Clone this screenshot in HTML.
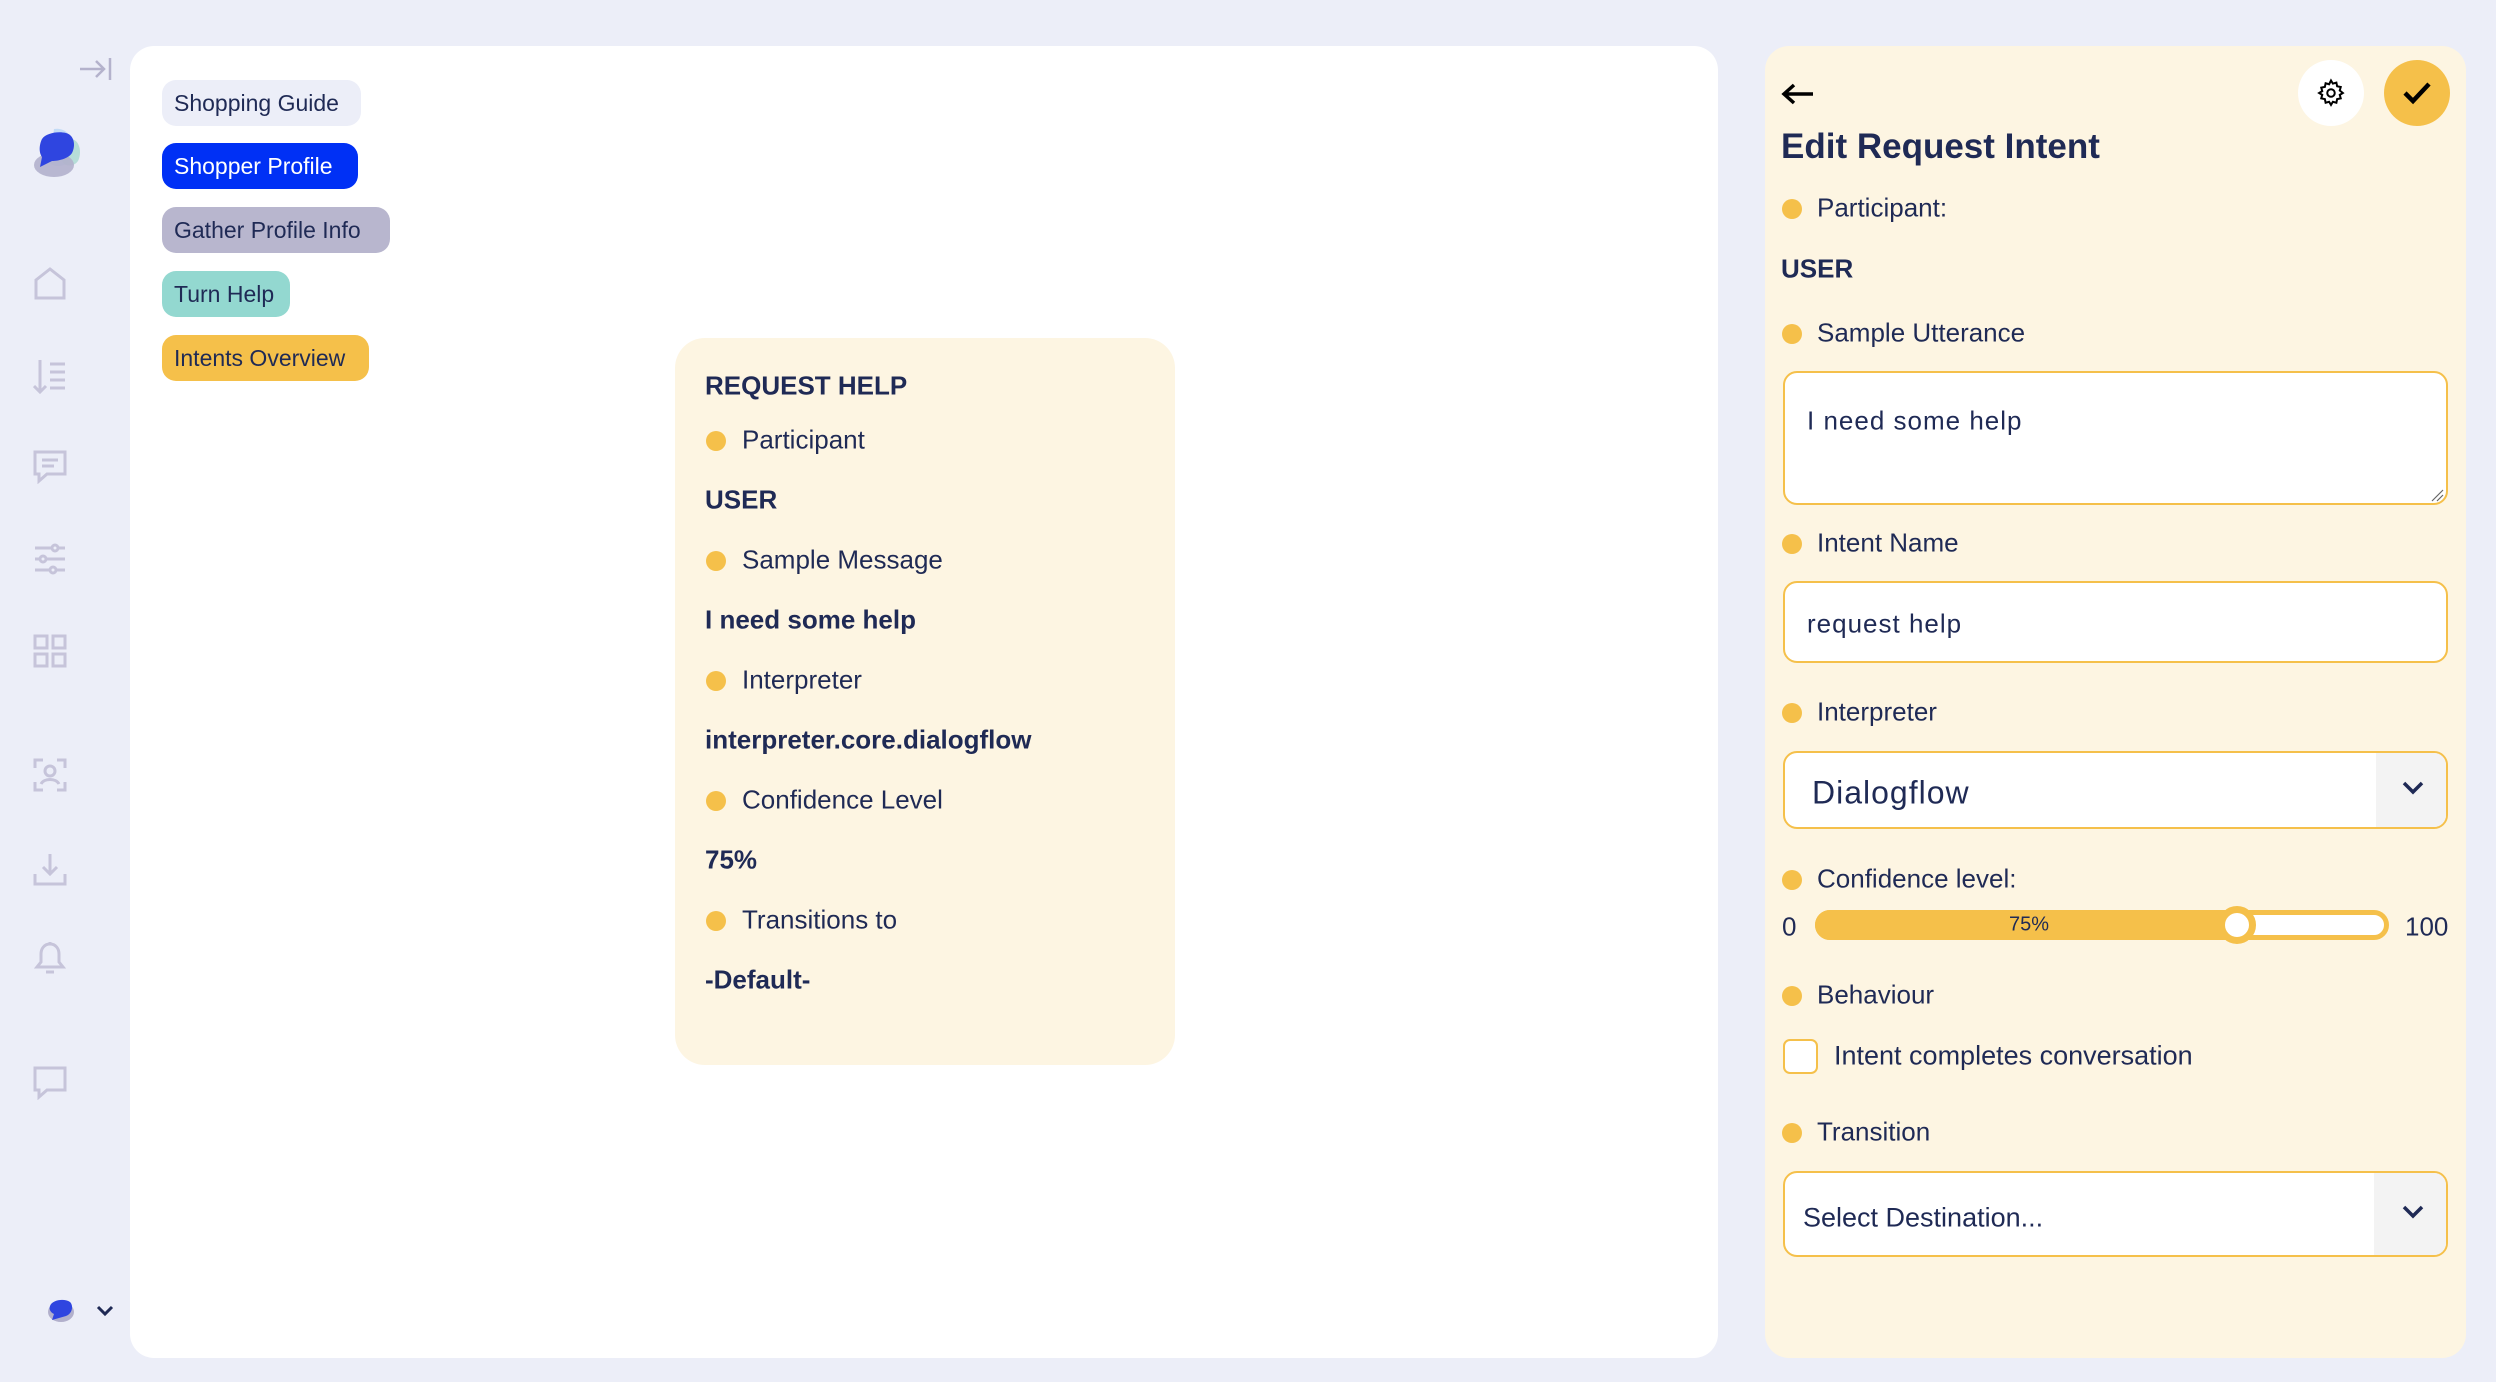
<!DOCTYPE html>
<html><head><meta charset="utf-8"><style>
*{box-sizing:border-box;margin:0;padding:0}
body{width:2496px;height:1382px;background:#eceef8;font-family:"Liberation Sans",sans-serif;color:#1f2a55;position:relative;overflow:hidden}
.abs{position:absolute}
.main{left:130px;top:46px;width:1588px;height:1312px;background:#fff;border-radius:24px}
.tag{position:absolute;left:162px;height:46px;border-radius:14px;font-size:23px;line-height:46px;padding:0 12px}
.card{left:675px;top:338px;width:500px;height:727px;background:#fdf5e2;border-radius:30px}
.t{position:absolute;font-size:26px;white-space:nowrap;transform:translateY(-50%)}
.b{font-weight:bold}
.dot{position:absolute;width:20px;height:20px;border-radius:50%;background:#f5c04a;transform:translateY(-50%)}
.rp{left:1765px;top:46px;width:701px;height:1312px;background:#fdf5e2;border-radius:24px}
.box{position:absolute;left:1783px;width:665px;background:#fff;border:2px solid #f5c04a;border-radius:14px}
.ic{position:absolute;left:33px}
</style></head><body>
<svg class="abs" style="left:78px;top:56px" width="36" height="26" viewBox="0 0 36 26" fill="none" stroke="#b4b2cc" stroke-width="2.5"><path d="M2 13H26M18 5l8 8-8 8M32 2v22"/></svg>
<svg class="abs" style="left:32px;top:125px" width="56" height="56" viewBox="0 0 56 56"><path d="M22 4c10-2 18 6 18 14l-4 20c-6 4-14 4-18 0z" fill="#b9d6f5" opacity=".8"/><path d="M40 14c8 2 10 14 6 22-4 6-14 6-16 0z" fill="#a9d8d0" opacity=".8"/><ellipse cx="22" cy="40" rx="20" ry="12" fill="#b2b0cc" opacity=".9"/><path d="M10 14c4-6 16-8 24-6 8 2 10 12 6 20-4 6-14 8-20 8l-12 6 2-10c-4-6-2-14 0-18z" fill="#2f45e0"/></svg>
<svg class="ic" style="top:266px" width="34" height="34" viewBox="0 0 34 34" fill="none" stroke="#c6c4da" stroke-width="3"><path d="M3 14L17 3l14 11v18H3z"/></svg>
<svg class="ic" style="top:358px" width="34" height="36" viewBox="0 0 34 36" fill="none" stroke="#c6c4da" stroke-width="3"><path d="M7 2v32M1 28l6 6 6-6M17 6h15M17 14h15M17 22h15M17 30h15"/></svg>
<svg class="ic" style="top:450px" width="34" height="34" viewBox="0 0 34 34" fill="none" stroke="#c6c4da" stroke-width="3"><path d="M2 2h30v22H14l-8 7v-7H2zM9 10h16M9 16h12"/></svg>
<svg class="ic" style="top:542px" width="34" height="34" viewBox="0 0 34 34" fill="none" stroke="#c6c4da" stroke-width="3"><path d="M2 6h30M2 17h30M2 28h30"/><circle cx="22" cy="6" r="3" fill="#eceef8"/><circle cx="10" cy="17" r="3" fill="#eceef8"/><circle cx="20" cy="28" r="3" fill="#eceef8"/></svg>
<svg class="ic" style="top:634px" width="34" height="34" viewBox="0 0 34 34" fill="none" stroke="#c6c4da" stroke-width="3"><rect x="2" y="2" width="12" height="12"/><rect x="20" y="2" width="12" height="12"/><rect x="2" y="20" width="12" height="12"/><rect x="20" y="20" width="12" height="12"/></svg>
<svg class="ic" style="top:758px" width="34" height="34" viewBox="0 0 34 34" fill="none" stroke="#c6c4da" stroke-width="3"><path d="M2 10V2h8M24 2h8v8M32 24v8h-8M10 32H2v-8"/><circle cx="17" cy="13" r="5"/><path d="M8 26c3-6 15-6 18 0"/></svg>
<svg class="ic" style="top:852px" width="34" height="34" viewBox="0 0 34 34" fill="none" stroke="#c6c4da" stroke-width="3"><path d="M17 2v20M10 15l7 7 7-7M2 22v10h30V22"/></svg>
<svg class="ic" style="top:940px" width="34" height="36" viewBox="0 0 34 36" fill="none" stroke="#c6c4da" stroke-width="3"><path d="M17 4c-6 0-9 5-9 10v8l-4 5h26l-4-5v-8c0-5-3-10-9-10zM13 32h8M17 2v2"/></svg>
<svg class="ic" style="top:1066px" width="34" height="34" viewBox="0 0 34 34" fill="none" stroke="#c6c4da" stroke-width="3"><path d="M2 2h30v22H14l-8 7v-7H2z"/></svg>
<svg class="abs" style="left:46px;top:1296px" width="30" height="28" viewBox="0 0 30 28"><ellipse cx="15" cy="16" rx="13" ry="10" fill="#b2b0cc"/><path d="M4 10c2-6 14-8 20-4 4 4 2 12-4 14l-14 4 2-6c-4-2-5-5-4-8z" fill="#2f45e0"/></svg>
<svg class="abs" style="left:96px;top:1304px" width="18" height="14" viewBox="0 0 18 14" fill="none" stroke="#1f2a55" stroke-width="3"><path d="M2 3l7 7 7-7"/></svg>

<div class="abs main"></div>
<div class="tag" style="top:80px;background:#eceef8;width:199px">Shopping Guide</div>
<div class="tag" style="top:143px;background:#0030f5;color:#fff;width:196px">Shopper Profile</div>
<div class="tag" style="top:207px;background:#b8b6ce;width:228px">Gather Profile Info</div>
<div class="tag" style="top:271px;background:#93d8d0;width:128px">Turn Help</div>
<div class="tag" style="top:335px;background:#f5c04a;width:207px">Intents Overview</div>

<div class="abs card"></div>
<div class="t b" style="left:705px;top:386px">REQUEST HELP</div>
<div class="dot" style="left:706px;top:441px"></div><div class="t" style="left:742px;top:440px">Participant</div>
<div class="t b" style="left:705px;top:500px">USER</div>
<div class="dot" style="left:706px;top:561px"></div><div class="t" style="left:742px;top:560px">Sample Message</div>
<div class="t b" style="left:705px;top:620px">I need some help</div>
<div class="dot" style="left:706px;top:681px"></div><div class="t" style="left:742px;top:680px">Interpreter</div>
<div class="t b" style="left:705px;top:740px">interpreter.core.dialogflow</div>
<div class="dot" style="left:706px;top:801px"></div><div class="t" style="left:742px;top:800px">Confidence Level</div>
<div class="t b" style="left:705px;top:860px">75%</div>
<div class="dot" style="left:706px;top:921px"></div><div class="t" style="left:742px;top:920px">Transitions to</div>
<div class="t b" style="left:705px;top:980px">-Default-</div>

<div class="abs rp"></div>
<svg class="abs" style="left:1781px;top:82px" width="34" height="24" viewBox="0 0 34 24" fill="none" stroke="#000" stroke-width="3.5"><path d="M32 12H4M13 3L3 12l10 9"/></svg>
<div class="abs" style="left:2298px;top:60px;width:66px;height:66px;border-radius:50%;background:#fff"></div>
<svg class="abs" style="left:2316px;top:78px" width="30" height="30" viewBox="0 0 24 24" fill="none" stroke="#000" stroke-width="1.6"><circle cx="12" cy="12" r="3"/><path d="M12 2l1.5 2.5 2.8-.8.6 2.9 2.9.6-.8 2.8L21.5 12 19 13.5l.8 2.8-2.9.6-.6 2.9-2.8-.8L12 21.5 10.5 19l-2.8.8-.6-2.9-2.9-.6.8-2.8L2.5 12 5 10.5l-.8-2.8 2.9-.6.6-2.9 2.8.8z"/></svg>
<div class="abs" style="left:2384px;top:60px;width:66px;height:66px;border-radius:50%;background:#f5c04a"></div>
<svg class="abs" style="left:2402px;top:80px" width="30" height="26" viewBox="0 0 30 26" fill="none" stroke="#000" stroke-width="4.5"><path d="M3 13l8 8L27 4"/></svg>
<div class="t b" style="left:1781px;top:147px;font-size:35px">Edit Request Intent</div>
<div class="dot" style="left:1782px;top:209px"></div><div class="t" style="left:1817px;top:208px">Participant:</div>
<div class="t b" style="left:1781px;top:269px">USER</div>
<div class="dot" style="left:1782px;top:334px"></div><div class="t" style="left:1817px;top:333px">Sample Utterance</div>
<div class="box" style="top:371px;height:134px"></div>
<div class="t" style="left:1807px;top:421px;letter-spacing:1px">I need some help</div>
<svg class="abs" style="left:2430px;top:488px" width="14" height="14" viewBox="0 0 14 14" stroke="#666" stroke-width="1.2"><path d="M2 13L13 2M7 13l6-6"/></svg>
<div class="dot" style="left:1782px;top:544px"></div><div class="t" style="left:1817px;top:543px">Intent Name</div>
<div class="box" style="top:581px;height:82px"></div>
<div class="t" style="left:1807px;top:624px;letter-spacing:1px">request help</div>
<div class="dot" style="left:1782px;top:713px"></div><div class="t" style="left:1817px;top:712px">Interpreter</div>
<div class="box" style="top:751px;height:78px;overflow:hidden"><div style="position:absolute;right:0;top:0;width:70px;height:100%;background:#f3f3f3"></div></div>
<div class="t" style="left:1812px;top:793px;font-size:32px;letter-spacing:1px">Dialogflow</div>
<svg class="abs" style="left:2401px;top:780px" width="24" height="16" viewBox="0 0 24 16" fill="none" stroke="#1f2a55" stroke-width="3.5"><path d="M3 3l9 9 9-9"/></svg>
<div class="dot" style="left:1782px;top:880px"></div><div class="t" style="left:1817px;top:879px">Confidence level:</div>
<div class="t" style="left:1782px;top:927px">0</div>
<div class="abs" style="left:1815px;top:910px;width:574px;height:30px;border-radius:15px;background:#fff;border:5px solid #f5c04a"></div>
<div class="abs" style="left:1815px;top:910px;width:430px;height:30px;border-radius:15px 0 0 15px;background:#f5c04a"></div>
<div class="t" style="left:2009px;top:925px;font-size:20px">75%</div>
<div class="abs" style="left:2218px;top:906px;width:38px;height:38px;border-radius:50%;background:#fff;border:7px solid #f5c04a"></div>
<div class="t" style="left:2405px;top:927px">100</div>
<div class="dot" style="left:1782px;top:996px"></div><div class="t" style="left:1817px;top:995px">Behaviour</div>
<div class="abs" style="left:1783px;top:1039px;width:35px;height:35px;border:2px solid #f5c04a;border-radius:7px;background:#fff"></div>
<div class="t" style="left:1834px;top:1056px;font-size:27px">Intent completes conversation</div>
<div class="dot" style="left:1782px;top:1133px"></div><div class="t" style="left:1817px;top:1132px">Transition</div>
<div class="box" style="top:1171px;height:86px;overflow:hidden"><div style="position:absolute;right:0;top:0;width:72px;height:100%;background:#f3f3f3"></div></div>
<div class="t" style="left:1803px;top:1218px;font-size:27px">Select Destination...</div>
<svg class="abs" style="left:2401px;top:1204px" width="24" height="16" viewBox="0 0 24 16" fill="none" stroke="#1f2a55" stroke-width="3.5"><path d="M3 3l9 9 9-9"/></svg>
</body></html>
